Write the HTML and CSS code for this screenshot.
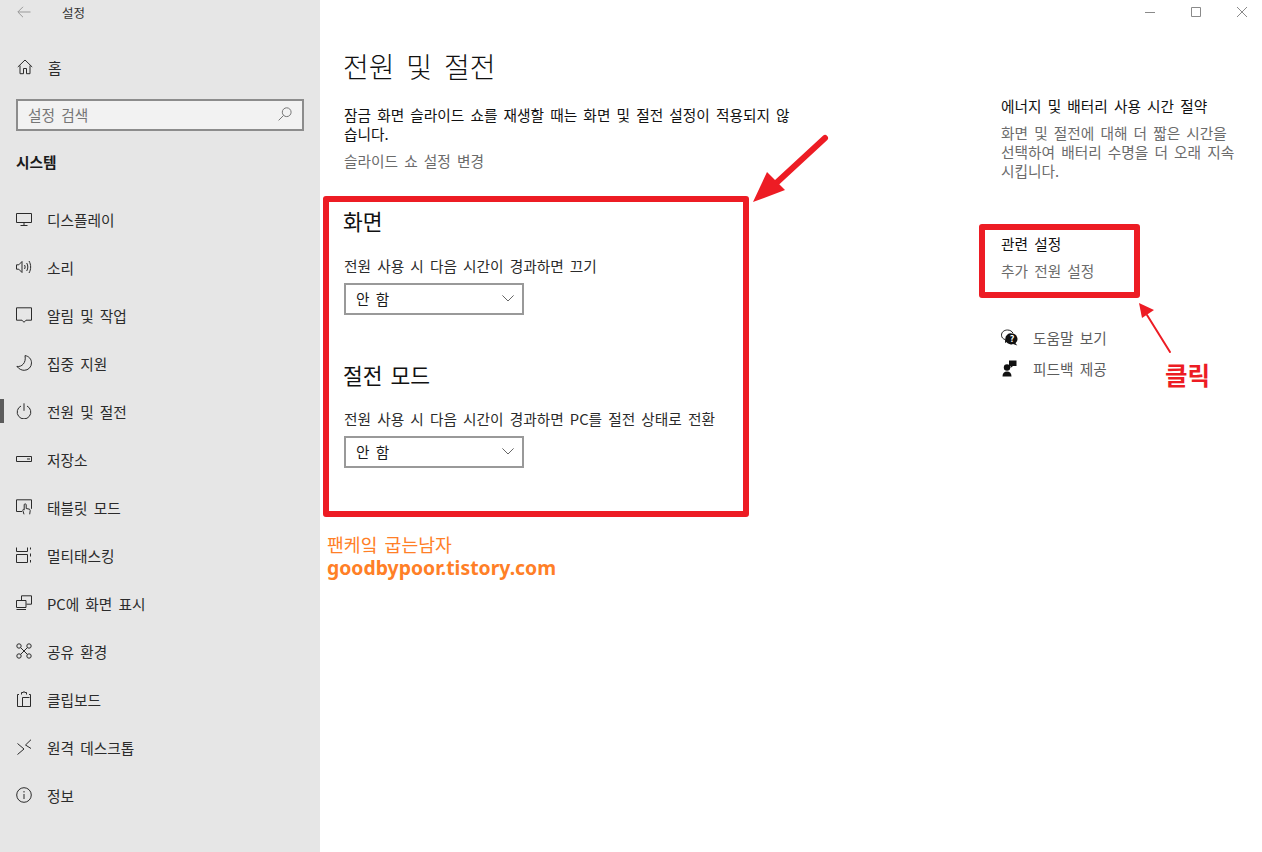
FILE: index.html
```html
<!DOCTYPE html>
<html lang="ko">
<head>
<meta charset="utf-8">
<title>설정</title>
<link rel="stylesheet" href="styles.css">
</head>
<body>
<div class="window">
  <nav class="sidebar">
    <div class="titlebar">
      <svg class="back" viewBox="0 0 14 12"><path d="M13.5 6H1M6 .8 .8 6 6 11.2"/></svg>
      <span>설정</span>
    </div>
    <div class="nav-row home">
      <svg class="icon" viewBox="0 0 16 16"><path d="M.8 8 8 1l7.2 7M3 6.5v8.2h3.5V9.5h3v5.2H13V6.5"/></svg>
      <span class="home-label">홈</span>
    </div>
    <div class="search">
      <span>설정 검색</span>
      <svg class="search-icon" viewBox="0 0 14 14"><circle cx="8.7" cy="5.2" r="4.4"/><path d="M5.6 8.4 .6 13.4"/></svg>
    </div>
    <div class="group">시스템</div>
    <ul class="nav">
      <li class="nav-row"><svg class="icon" viewBox="0 0 16 16"><path d="M.5 2.5h15v9H.5zM8 11.500v3M4.500 14.500h7"/></svg>디스플레이</li>
      <li class="nav-row"><svg class="icon" viewBox="0 0 16 16"><path d="M.5 5.800h2.300L6 2.500v11L2.800 10.200H.5zM8.500 6c.8 1.300.8 2.700 0 4M10.700 4c1.500 2.600 1.500 5.400 0 8M13 2c2.200 3.800 2.200 8.200 0 12"/></svg>소리</li>
      <li class="nav-row"><svg class="icon" viewBox="0 0 16 16"><path d="M.5 .8h15v12.400H10L8 15.300 6 13.200H.5z"/></svg>알림 및 작업</li>
      <li class="nav-row"><svg class="icon" viewBox="0 0 16 16"><path d="M9 .6c4 .6 6.500 3.600 6.500 7.300A7.300 7.300 0 0 1 8.200 15.300C5.500 15.300 2.900 14 .9 11.400c4.700.9 9.600-3.500 8.100-10.800z"/></svg>집중 지원</li>
      <li class="nav-row active"><svg class="icon" viewBox="0 0 16 16"><path d="M5 3a6.800 6.800 0 1 0 6 0M8 .3v7.500"/></svg>전원 및 절전</li>
      <li class="nav-row"><svg class="icon" viewBox="0 0 16 16"><path d="M.5 5.500h15v5H.5zM11 8h3"/></svg>저장소</li>
      <li class="nav-row"><svg class="icon" viewBox="0 0 16 16"><path d="M6 12.500H.5V.8h15v9M8 15.300 6.800 11.500c-.3-1 .8-1.500 1.400-.6V5.800c0-1.300 2-1.300 2 0v3.700l3 .6c.8.2 1 .8 1 1.500l-.5 3.700"/></svg>태블릿 모드</li>
      <li class="nav-row"><svg class="icon" viewBox="0 0 16 16"><path d="M.5 .5v4h11v-4M.5 15.500v-8h11v8zM14.500 .5v2M14.500 6.500v3M14.500 13v2.500"/></svg>멀티태스킹</li>
      <li class="nav-row"><svg class="icon" viewBox="0 0 16 16"><path d="M5.500 5V.8h10v8.400h-5M.5 5.500h9.500v7H.5zM.5 14.500h9.500"/></svg>PC에 화면 표시</li>
      <li class="nav-row"><svg class="icon" viewBox="0 0 16 16"><circle cx="3" cy="3" r="2.200"/><circle cx="13" cy="3" r="2.200"/><circle cx="3" cy="13" r="2.200"/><circle cx="13" cy="13" r="2.200"/><path d="M4.600 4.600 11.400 11.400M11.400 4.600 4.600 11.400"/></svg>공유 환경</li>
      <li class="nav-row"><svg class="icon" viewBox="0 0 16 16"><path d="M3 3.500H1.500v12h13v-12H13M5.500 3.500V1.500h1.800c0-1.300 1.400-1.300 1.400 0h1.800v2M6.500 15.500v-9h7"/></svg>클립보드</li>
      <li class="nav-row"><svg class="icon" viewBox="0 0 16 16"><path d="M1.500 4.500 8 10 1.500 15.500M15 .7 9.500 6 15 9.500"/></svg>원격 데스크톱</li>
      <li class="nav-row"><svg class="icon" viewBox="0 0 16 16"><circle cx="8" cy="8" r="7.300"/><path d="M8 7v5M8 4v1.500"/></svg>정보</li>
    </ul>
  </nav>

  <main class="main">
    <div class="controls">
      <svg class="ctl" viewBox="0 0 10 10"><path d="M0 5.500h10"/></svg>
      <svg class="ctl" viewBox="0 0 10 10"><path d="M.5 .5h9v9h-9z"/></svg>
      <svg class="ctl" viewBox="0 0 10 10"><path d="M0 0l10 10M10 0 0 10"/></svg>
    </div>
    <div class="columns">
      <section class="content">
        <h1>전원 및 절전</h1>
        <p class="note">잠금 화면 슬라이드 쇼를 재생할 때는 화면 및 절전 설정이 적용되지 않습니다.</p>
        <a class="link slide-link">슬라이드 쇼 설정 변경</a>
        <h2 class="screen-head">화면</h2>
        <label class="field-label screen-label">전원 사용 시 다음 시간이 경과하면 끄기</label>
        <div class="select"><span>안 함</span><svg viewBox="0 0 12 7"><path d="M.4 .4 6 6l5.600-5.600"/></svg></div>
        <h2 class="sleep-head">절전 모드</h2>
        <label class="field-label sleep-label">전원 사용 시 다음 시간이 경과하면 PC를 절전 상태로 전환</label>
        <div class="select"><span>안 함</span><svg viewBox="0 0 12 7"><path d="M.4 .4 6 6l5.600-5.600"/></svg></div>
      </section>
      <aside class="aside">
        <h3>에너지 및 배터리 사용 시간 절약</h3>
        <p class="tip">화면 및 절전에 대해 더 짧은 시간을 선택하여 배터리 수명을 더 오래 지속시킵니다.</p>
        <h3 class="related">관련 설정</h3>
        <a class="link extra">추가 전원 설정</a>
        <div class="help-row first"><svg class="help-icon" viewBox="0 0 17 17"><path class="thin" d="M6.500 11.500 4.500 13.500v-2.800C2 10 .5 8.500.5 6.200.5 3 3.200 1 6.500 1c2.500 0 4.700 1.300 5.500 3.300"/><path class="solid" d="M11 4.500a5.500 5.500 0 0 1 3.500 9.700l1.800 2.300-4.300-1.600A5.500 5.500 0 1 1 11 4.500z"/><text x="11" y="13" class="q">?</text></svg><span>도움말 보기</span></div>
        <div class="help-row"><svg class="help-icon" viewBox="0 0 17 17"><circle class="solid" cx="6" cy="7.500" r="3.200"/><path class="solid" d="M1.500 16.500c0-3.500 1.800-5 4.500-5s4.500 1.500 4.500 5z"/><path class="solid" d="M8 .5h7.500v5.500H12L9.500 8V6H8z"/></svg><span>피드백 제공</span></div>
      </aside>
    </div>
  </main>

  <div class="mark mark-a"></div>
  <div class="mark mark-b"></div>
  <svg class="arrows" viewBox="0 0 1262 852">
    <path class="shaft thick" d="M825 138 773 186"/>
    <path class="head" d="M753 202 767 172 785 190z"/>
    <path class="shaft" d="M1170 352 1147 315"/>
    <path class="head" d="M1139 303 1142 318 1154 310z"/>
  </svg>
  <div class="click">클릭</div>
  <div class="water">
    <div class="water-ko">팬케잌 굽는남자</div>
    <div class="water-en">goodbypoor.tistory.com</div>
  </div>
</div>
</body>
</html>
```
FILE: styles.css
```css
* { box-sizing: border-box; }
html, body { margin: 0; height: 100%; }
body {
  background: #fff;
  color: #1a1a1a;
  font-family: "Noto Sans CJK KR", "Noto Sans", sans-serif;
  font-size: 14.7px;
  word-spacing: 2px;
  overflow: hidden;
}
.window {
  position: relative;
  display: flex;
  width: 1262px;
  height: 852px;
  overflow: hidden;
}
.sidebar {
  flex: 0 0 320px;
  background: #e6e6e6;
  padding-left: 16px;
  padding-right: 16px;
}
.titlebar {
  display: flex;
  align-items: center;
  height: 24px;
  font-size: 12.5px;
  color: #333;
}
.back {
  width: 14px;
  height: 12px;
  margin-left: 1px;
  margin-right: 31px;
  fill: none;
  stroke: #999;
  stroke-width: 1;
}
.nav-row {
  display: flex;
  align-items: center;
  height: 48px;
  color: #2b2b2b;
}
.home { margin-top: 19px; }
.icon {
  flex: none;
  width: 16px;
  height: 16px;
  margin-right: 15px;
  fill: none;
  stroke: #2b2b2b;
  stroke-width: 1;
}
.home .icon { margin-left: 1px; margin-right: 15px; }
.search {
  display: flex;
  align-items: center;
  justify-content: space-between;
  height: 32px;
  margin-top: 8px;
  padding: 0 10px 2px;
  background: #f2f2f2;
  border: 2px solid #8c8c8c;
  color: #767676;
}
.search-icon {
  width: 14px;
  height: 14px;
  fill: none;
  stroke: #767676;
  stroke-width: 1;
}
.group {
  margin-top: 20px;
  height: 24px;
  line-height: 22px;
  font-weight: 700;
  color: #1a1a1a;
}
.nav {
  list-style: none;
  margin: 20px 0 0;
  padding: 0;
}
.active { position: relative; }
.active::before {
  content: "";
  position: absolute;
  left: -16px;
  top: 12px;
  width: 4px;
  height: 24px;
  background: #5c5c5c;
}
.main {
  flex: 1;
  display: flex;
  flex-direction: column;
}
.controls {
  display: flex;
  justify-content: flex-end;
  gap: 36px;
  height: 24px;
  padding: 7px 15px 0 0;
}
.ctl {
  width: 10px;
  height: 10px;
  fill: none;
  stroke: #8a8a8a;
  stroke-width: 1;
}
.columns {
  display: flex;
  padding-left: 24px;
}
.content { width: 456px; flex: none; }
h1 {
  margin: 21px 0 0 -1px;
  font-size: 28px;
  font-weight: 300;
  line-height: 42px;
  word-spacing: 4px;
  color: #111;
}
.note {
  margin: 18px 0 0;
  line-height: 19px;
  color: #111;
}
.link {
  display: block;
  color: #6b6b6b;
}
.slide-link { margin-top: 8px; line-height: 20px; }
h2 {
  margin: 0 0 0 -1px;
  font-size: 21.500px;
  font-weight: 400;
  line-height: 30px;
  color: #111;
}
.screen-head { margin-top: 35px; }
.sleep-head { margin-top: 45px; }
.field-label {
  display: block;
  line-height: 20px;
  color: #2b2b2b;
}
.screen-label { margin-top: 20px; }
.sleep-label { margin-top: 19px; }
.select {
  display: flex;
  align-items: center;
  justify-content: space-between;
  width: 180px;
  height: 32px;
  margin-top: 7px;
  padding: 0 8px 1px 10px;
  border: 2px solid #999;
  background: #fff;
}
.select svg {
  width: 12px;
  height: 7px;
  fill: none;
  stroke: #666;
  stroke-width: 1;
}
.aside {
  width: 240px;
  margin-left: 201px;
  padding-top: 72px;
}
h3 {
  margin: 0;
  font-size: 14.700px;
  font-weight: 400;
  line-height: 20px;
  color: #111;
}
.tip {
  margin: 7px 0 0;
  line-height: 19px;
  color: #6b6b6b;
}
.related { margin-top: 54px; }
.extra { margin-top: 7px; line-height: 20px; }
.help-row {
  display: flex;
  align-items: center;
  height: 20px;
  margin-top: 11px;
  color: #5c5c5c;
}
.help-row.first { margin-top: 46px; }
.help-icon {
  flex: none;
  width: 17px;
  height: 17px;
  margin-right: 15px;
}
.thin { fill: none; stroke: #222; stroke-width: 1; }
.solid { fill: #111; }
.q { fill: #fff; font-size: 9px; font-weight: 700; text-anchor: middle; }
.mark {
  position: absolute;
  border: 6px solid #ed1c24;
  border-radius: 3px;
}
.mark-a { left: 323px; top: 196px; width: 426px; height: 321px; }
.mark-b { left: 979px; top: 224px; width: 161px; height: 74px; }
.arrows {
  position: absolute;
  left: 0;
  top: 0;
  width: 1262px;
  height: 852px;
  pointer-events: none;
}
.shaft { fill: none; stroke: #ed1c24; stroke-width: 2; stroke-linecap: round; }
.shaft.thick { stroke-width: 6; }
.head { fill: #ed1c24; }
.click {
  position: absolute;
  left: 1165px;
  top: 357px;
  font-size: 24.500px;
  font-weight: 700;
  line-height: 36px;
  word-spacing: 0;
  color: #ed1c24;
}
.water {
  position: absolute;
  left: 327px;
  top: 532px;
  color: #ff7f27;
}
.water-ko { font-size: 18.300px; line-height: 24px; }
.water-en { font-family: "Noto Sans", sans-serif; font-size: 19.400px; font-weight: 700; line-height: 24px; word-spacing: 0; }
```
